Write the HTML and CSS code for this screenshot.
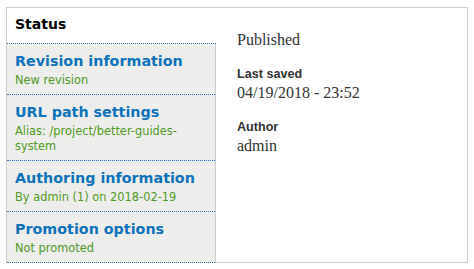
FILE: index.html
```html
<!DOCTYPE html>
<html>
<head>
<meta charset="utf-8">
<link rel="stylesheet" href="styles.css">
</head>
<body>
<div class="vtabs">
  <ul class="tab-list">
    <li class="tab selected"><span class="tab-title">Status</span></li>
    <li class="tab"><span class="tab-title">Revision information</span><span class="tab-summary">New revision</span></li>
    <li class="tab"><span class="tab-title">URL path settings</span><span class="tab-summary">Alias: /project/better-guides-system</span></li>
    <li class="tab"><span class="tab-title">Authoring information</span><span class="tab-summary">By admin (1) on 2018-02-19</span></li>
    <li class="tab"><span class="tab-title">Promotion options</span><span class="tab-summary">Not promoted</span></li>
  </ul>
  <div class="pane">
    <div class="value">Published</div>
    <div class="label">Last saved</div>
    <div class="value">04/19/2018 - 23:52</div>
    <div class="label">Author</div>
    <div class="value">admin</div>
  </div>
</div>
</body>
</html>
```
FILE: styles.css
```css
html, body {
  margin: 0;
  padding: 0;
  background: #fff;
}
body {
  padding: 7px 0 0 6px;
}
.vtabs {
  width: 462px;
  box-sizing: border-box;
  border: 1px solid #ccc;
  border-bottom: none;
  display: flex;
  align-items: stretch;
}
.tab-list {
  list-style: none;
  margin: 0;
  padding: 0;
  width: 209px;
  box-sizing: border-box;
  background: #edeeeb;
  border-right: 1px solid #ccc;
  display: flex;
  flex-direction: column;
}
.tab {
  display: flex;
  flex-direction: column;
  padding: 9px 8px 6px 8px;
  border-bottom: 1px dotted #1b6fbe;
  font-family: "DejaVu Sans", sans-serif;
}
.tab.selected {
  background: #fff;
  margin-right: -1px;
  padding: 8px 8px 10px 8px;
}
.tab-title {
  font-size: 14.3px;
  line-height: 17px;
  font-weight: bold;
  color: #0a72bd;
}
.selected .tab-title {
  font-size: 14px;
  color: #000;
}
.tab-summary {
  margin-top: 3px;
  font-size: 11.4px;
  line-height: 15px;
  color: #4d9a24;
  padding-right: 30px;
}
.pane {
  flex: 1;
  border-bottom: 1px solid #ccc;
  padding: 22px 21px 0 21px;
}
.value {
  font-family: "Liberation Serif", serif;
  font-size: 16px;
  line-height: 20px;
  color: #333;
  margin-bottom: 16px;
}
.label {
  font-family: "Liberation Sans", sans-serif;
  font-weight: bold;
  font-size: 12.6px;
  line-height: 17px;
  color: #333;
}
```
